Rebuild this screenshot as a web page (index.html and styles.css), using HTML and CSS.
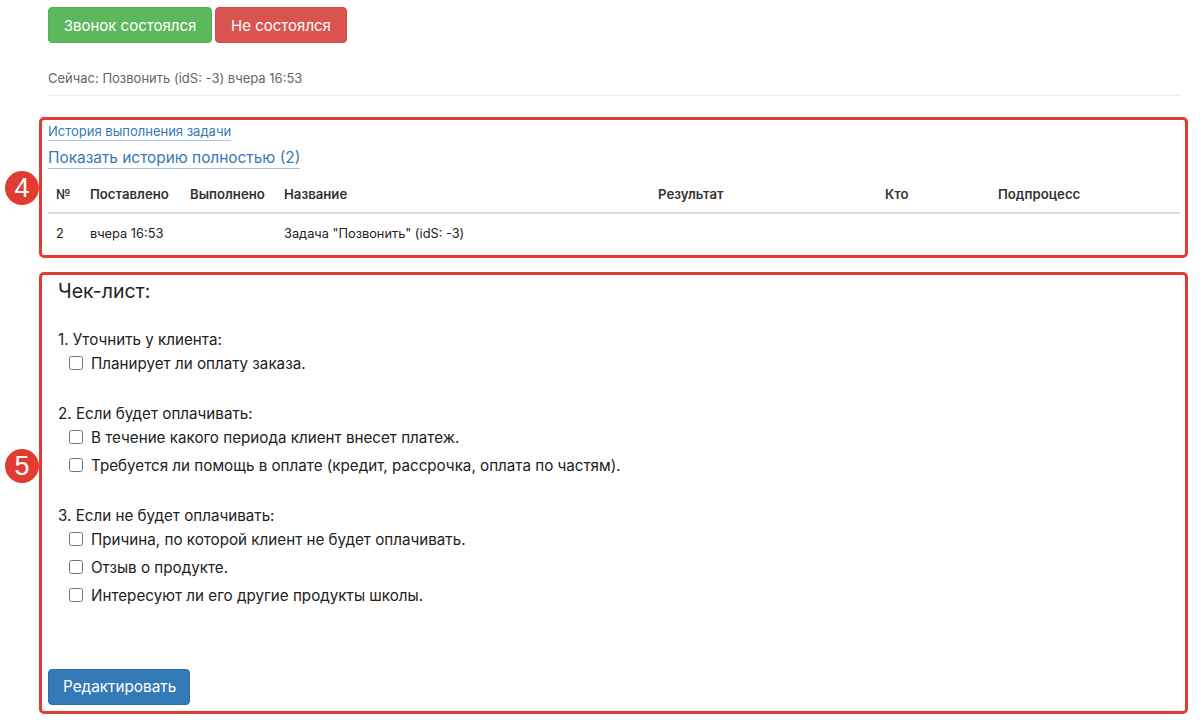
FILE: index.html
```html
<!DOCTYPE html>
<html lang="ru">
<head>
<meta charset="utf-8">
<link rel="stylesheet" href="styles.css">
</head>
<body>
<div class="page">
  <div class="actions">
    <button class="btn btn-success">Звонок состоялся</button>
    <button class="btn btn-danger">Не состоялся</button>
  </div>
  <div class="status">Сейчас: Позвонить (idS: -3) вчера 16:53</div>
  <div class="divider"></div>

  <div class="mark-box box-history">
    <span class="marker marker-4">4</span>
    <div><a class="link-small">История выполнения задачи</a></div>
    <div class="link-row"><a class="link-big">Показать историю полностью (2)</a></div>
    <table class="history">
      <thead>
        <tr>
          <th class="c-num">№</th>
          <th class="c-set">Поставлено</th>
          <th class="c-done">Выполнено</th>
          <th class="c-name">Название</th>
          <th class="c-res">Результат</th>
          <th class="c-who">Кто</th>
          <th class="c-sub">Подпроцесс</th>
        </tr>
      </thead>
      <tbody>
        <tr>
          <td>2</td>
          <td>вчера 16:53</td>
          <td></td>
          <td>Задача "Позвонить" (idS: -3)</td>
          <td></td>
          <td></td>
          <td></td>
        </tr>
      </tbody>
    </table>
  </div>

  <div class="mark-box box-check">
    <span class="marker marker-5">5</span>
    <div class="checklist">
      <div class="cl-title">Чек-лист:</div>
      <div class="cl-group">
        <div class="cl-head">1. Уточнить у клиента:</div>
        <label class="cl-item"><input type="checkbox"><span>Планирует ли оплату заказа.</span></label>
      </div>
      <div class="cl-group">
        <div class="cl-head">2. Если будет оплачивать:</div>
        <label class="cl-item"><input type="checkbox"><span>В течение какого периода клиент внесет платеж.</span></label>
        <label class="cl-item"><input type="checkbox"><span>Требуется ли помощь в оплате (кредит, рассрочка, оплата по частям).</span></label>
      </div>
      <div class="cl-group">
        <div class="cl-head">3. Если не будет оплачивать:</div>
        <label class="cl-item"><input type="checkbox"><span>Причина, по которой клиент не будет оплачивать.</span></label>
        <label class="cl-item"><input type="checkbox"><span>Отзыв о продукте.</span></label>
        <label class="cl-item"><input type="checkbox"><span>Интересуют ли его другие продукты школы.</span></label>
      </div>
    </div>
    <button class="btn btn-primary">Редактировать</button>
  </div>
</div>
</body>
</html>
```

FILE: styles.css
```css
* { box-sizing: border-box; }
html, body { margin: 0; padding: 0; background: #fff; }
body {
  font-family: Inter, "Noto Sans", "DejaVu Sans", sans-serif;
  color: #333;
  font-size: 13px;
}
.page {
  padding: 7px 20px 0 48px;
}
.actions { display: flex; gap: 3px; }
.btn {
  font-family: inherit;
  font-size: 15px;
  height: 36px;
  padding: 0 14px;
  border: 1px solid transparent;
  border-radius: 4px;
  color: #fff;
  cursor: pointer;
  line-height: 1;
}
.btn-success { background: #5cb85c; border-color: #53b053; width: 164px; }
.btn-danger { background: #d9534f; border-color: #d34945; width: 132px; }
.btn-primary { background: #337ab7; border-color: #2e6da4; width: 142px; margin-top: 62px; font-size: 15.3px; }

.status {
  margin-top: 25px;
  line-height: 20px;
  color: #666;
  font-size: 13px;
}
.divider {
  margin-top: 7px;
  height: 1px;
  background: #eee;
}

.mark-box {
  position: relative;
  margin: 0 -8px 0 -9px;
  border: 3px solid #e23c32;
  border-radius: 5px;
  padding: 0 5px 0 6px;
}
.box-history { margin-top: 21px; padding-top: 2px; padding-bottom: 2px; }
.box-check { margin-top: 14px; padding-top: 4px; padding-bottom: 6px; }

.marker {
  position: absolute;
  left: -37px;
  width: 34px;
  height: 34px;
  border-radius: 50%;
  background: #e23c32;
  color: #fff;
  font-family: "Liberation Sans", Arial, sans-serif;
  font-size: 27px;
  line-height: 34px;
  text-align: center;
}
.marker-4 { top: 51px; }
.marker-5 { top: 174px; }

.link-small {
  display: inline-block;
  font-size: 13px;
  line-height: 18px;
  color: #337ab7;
  border-bottom: 1px solid #a9c6e0;
}
.link-row { margin-top: 7px; }
.link-big {
  display: inline-block;
  font-size: 15.4px;
  line-height: 20px;
  color: #337ab7;
  border-bottom: 1px solid #a9c6e0;
}

.history {
  width: 100%;
  margin-top: 7px;
  border-collapse: collapse;
  table-layout: fixed;
  font-size: 12.8px;
}
.history th {
  text-align: left;
  font-weight: 600;
  font-size: 13.2px;
  height: 37px;
  padding: 0 8px;
  border-bottom: 2px solid #ddd;
  color: #333;
}
.history td {
  height: 40px;
  padding: 0 8px;
  color: #222;
}
.c-num { width: 34px; }
.c-set { width: 100px; }
.c-done { width: 94px; }
.c-name { width: 374px; }
.c-res { width: 227px; }
.c-who { width: 113px; }

.checklist {
  padding-left: 10px;
  font-size: 15.2px;
  color: #222;
}
.cl-title {
  font-size: 19.5px;
  line-height: 24px;
  margin-bottom: 27px;
}
.cl-group { display: flex; flex-direction: column; }
.cl-group + .cl-group { margin-top: 29px; }
.cl-head { line-height: 20px; }
.cl-item {
  display: flex;
  align-items: center;
  height: 24px;
  margin-top: 1px;
  padding-left: 11px;
}
.cl-item + .cl-item { margin-top: 4px; }
.cl-item input {
  width: 14px;
  height: 14px;
  margin: 0 8px 0 0;
}
```
